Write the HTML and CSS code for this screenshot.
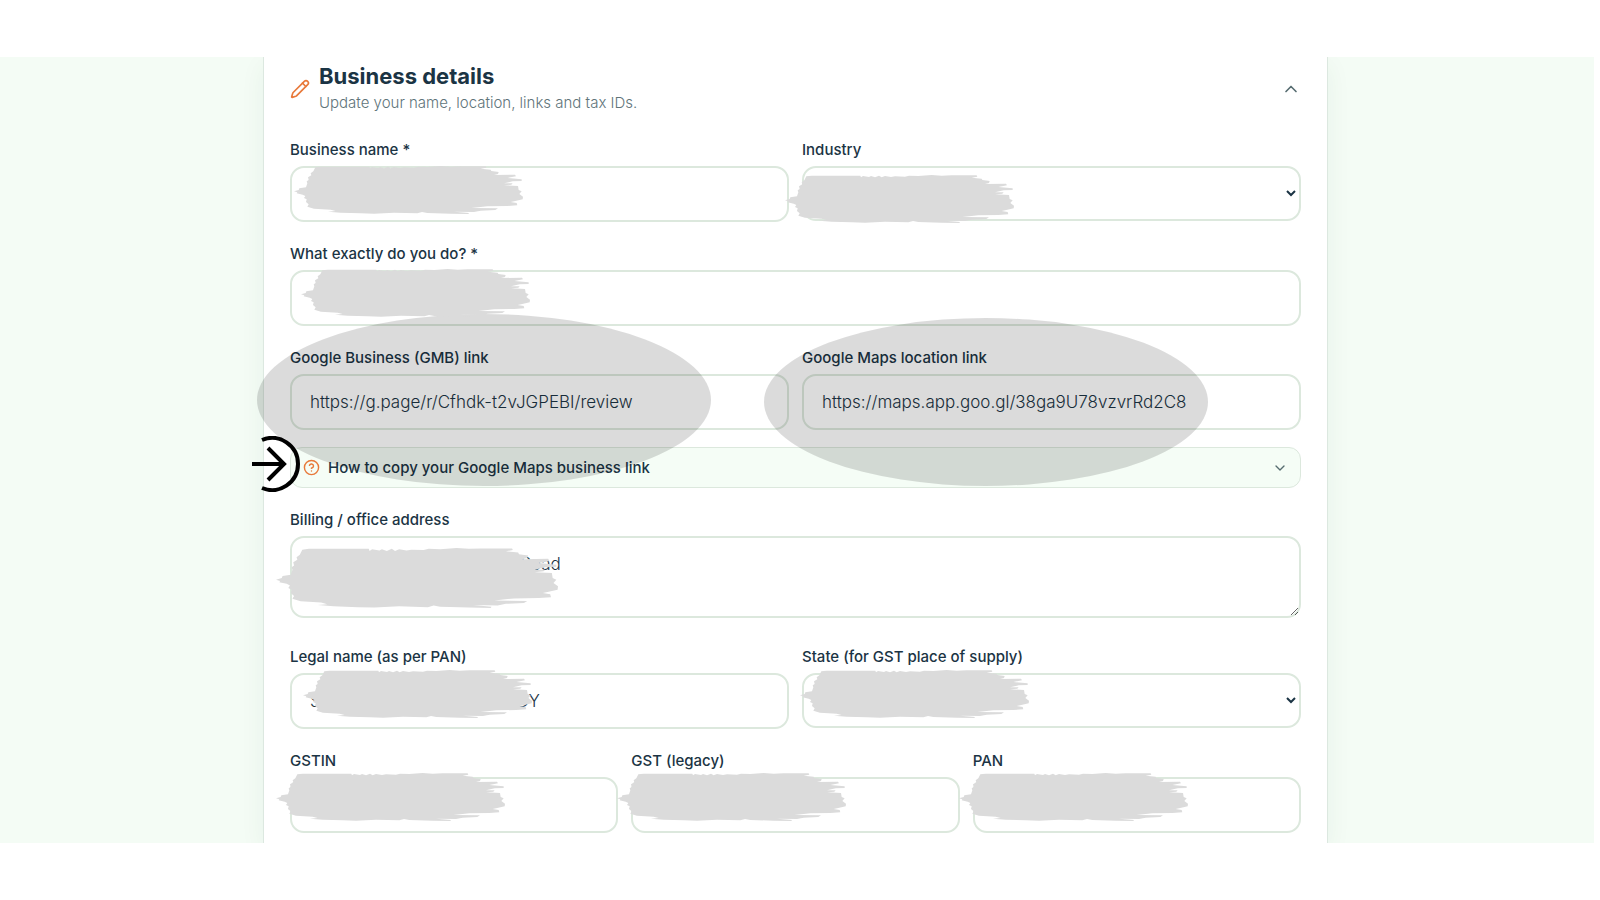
FILE: index.html
```html
<!DOCTYPE html>
<html lang="en">
<head>
<meta charset="utf-8">
<meta name="viewport" content="width=device-width, initial-scale=1.0">
<link rel="stylesheet" href="styles.css">
<title>Business details</title>
</head>
<body>
  <!-- Shared shapes -->
  <svg class="defs" aria-hidden="true">
    <symbol id="brush" viewBox="0 0 687 144" preserveAspectRatio="none">
      <path d="M64 4 L80 2 L226 2 L228 7 L234 3 L252 6 L258 3 L270 7 L282 2 L290 7 L300 3 L318 6 L330 4 L360 5 L372 2 L400 3 L440 0 L470 2 L500 1 L575 1 L577 5 L560 8 L590 11 L592 15 L614 18 L612 24 L600 27 L663 26 L666 31 L640 36 L683 40 L683 45 L656 46 L630 52 L656 52 L652 56 L630 58 L672 60 L674 72 L683 76 L676 84 L687 92 L686 100 L664 105 L650 108 L668 111 L670 118 L640 120 L580 121 L532 126 L612 127 L604 132 L560 134 L540 138 L480 137 L525 141 L523 144 L470 143 L400 141 L384 138 L370 142 L300 140 L240 143 L200 142 L140 140 L102 137 L125 135 L110 131 L60 128 L40 122 L44 115 L36 108 L38 100 L30 96 L34 90 L26 86 L8 82 L10 79 L0 76 L14 72 L16 67 L36 64 L40 52 L38 46 L44 42 L42 34 L52 28 L50 22 L58 16 Z"/>
    </symbol>
  </svg>

  <main class="page">
    <form class="card">
      <button type="button" class="card-header">
        <svg class="icon-pencil" viewBox="0 0 24 24">
          <path d="M21.2 6.8a2.8 2.8 0 0 0-4-4L3.8 16.2a2 2 0 0 0-.5.8L2 21.4a.5.5 0 0 0 .6.6L7 20.7a2 2 0 0 0 .8-.5z"/>
          <path d="m15 5 4 4"/>
        </svg>
        <span class="card-heading">
          <span class="card-title">Business details</span>
          <span class="card-subtitle">Update your name, location, links and tax IDs.</span>
        </span>
        <svg class="icon-chevron" viewBox="0 0 24 24"><path d="m18 15-6-6-6 6"/></svg>
      </button>

      <div class="row two">
        <div class="field">
          <label for="name">Business name *</label>
          <input id="name" type="text">
          <svg class="brush brush-name"><use href="#brush"/></svg>
        </div>
        <div class="field">
          <label for="industry">Industry</label>
          <select id="industry"><option></option></select>
          <svg class="brush brush-industry"><use href="#brush"/></svg>
        </div>
      </div>

      <div class="row">
        <div class="field">
          <label for="what">What exactly do you do? *</label>
          <input id="what" type="text">
          <svg class="brush brush-what"><use href="#brush"/></svg>
        </div>
      </div>

      <div class="row two">
        <div class="field">
          <label for="gmb">Google Business (GMB) link</label>
          <input id="gmb" type="text" value="https://g.page/r/Cfhdk-t2vJGPEBI/review">
          <div class="spot spot-gmb"></div>
        </div>
        <div class="field">
          <label for="maps">Google Maps location link</label>
          <input id="maps" type="text" value="https://maps.app.goo.gl/38ga9U78vzvrRd2C8">
          <div class="spot spot-maps"></div>
        </div>
      </div>

      <div class="help">
        <button type="button" class="help-toggle">
          <svg class="icon-help" viewBox="0 0 24 24">
            <circle cx="12" cy="12" r="10"/>
            <path d="M9.1 9a3 3 0 0 1 5.8 1c0 2-3 3-3 3"/>
            <path d="M12 17h.01"/>
          </svg>
          <span class="help-text">How to copy your Google Maps business link</span>
          <svg class="icon-chevron small" viewBox="0 0 24 24"><path d="m6 9 6 6 6-6"/></svg>
        </button>
        <svg class="pointer" viewBox="0 0 50 56">
          <path d="M10 4A26 26 0 1 1 10 52"/>
          <path d="M0 28H32M16 12l16 16-16 16"/>
        </svg>
      </div>

      <div class="row">
        <div class="field">
          <label for="address">Billing / office address</label>
          <textarea id="address">&nbsp;&nbsp;&nbsp;&nbsp;&nbsp;&nbsp;&nbsp;&nbsp;&nbsp;&nbsp;&nbsp;&nbsp;&nbsp;&nbsp;&nbsp;&nbsp;&nbsp;&nbsp;&nbsp;&nbsp;&nbsp;&nbsp;&nbsp;&nbsp;&nbsp;&nbsp;&nbsp;&nbsp;&nbsp;&nbsp;&nbsp;&nbsp;&nbsp;&nbsp;&nbsp;&nbsp;&nbsp;&nbsp;&nbsp;&nbsp;&nbsp;&nbsp;&nbsp;&nbsp;Road</textarea>
          <svg class="brush brush-address"><use href="#brush"/></svg>
        </div>
      </div>

      <div class="row two">
        <div class="field">
          <label for="legal">Legal name (as per PAN)</label>
          <input id="legal" type="text" value="S&nbsp;&nbsp;&nbsp;&nbsp;&nbsp;&nbsp;&nbsp;&nbsp;&nbsp;&nbsp;&nbsp;&nbsp;&nbsp;&nbsp;&nbsp;&nbsp;&nbsp;&nbsp;&nbsp;&nbsp;&nbsp;&nbsp;&nbsp;&nbsp;&nbsp;&nbsp;&nbsp;&nbsp;&nbsp;&nbsp;&nbsp;&nbsp;&nbsp;&nbsp;&nbsp;&nbsp;&nbsp;&nbsp;&nbsp;&nbsp;&nbsp;DY">
          <svg class="brush brush-legal"><use href="#brush"/></svg>
        </div>
        <div class="field">
          <label for="state">State (for GST place of supply)</label>
          <select id="state"><option></option></select>
          <svg class="brush brush-state"><use href="#brush"/></svg>
        </div>
      </div>

      <div class="row three">
        <div class="field">
          <label for="gstin">GSTIN</label>
          <input id="gstin" type="text">
          <svg class="brush brush-tax"><use href="#brush"/></svg>
        </div>
        <div class="field">
          <label for="gst">GST (legacy)</label>
          <input id="gst" type="text">
          <svg class="brush brush-tax"><use href="#brush"/></svg>
        </div>
        <div class="field">
          <label for="pan">PAN</label>
          <input id="pan" type="text">
          <svg class="brush brush-tax"><use href="#brush"/></svg>
        </div>
      </div>
    </form>
  </main>
</body>
</html>
```

FILE: styles.css
```css
* {
  box-sizing: border-box;
}
body {
  margin: 0;
  padding: 57px 6px 57px 0;
  background: #fff;
  color: #1b3444;
  font-family: Inter, "Noto Sans", sans-serif;
}
svg {
  fill: none;
  stroke: currentColor;
  stroke-width: 2;
  stroke-linecap: round;
  stroke-linejoin: round;
}
.defs {
  position: absolute;
  width: 0;
  height: 0;
}
.page {
  padding-right: 3px;
  background: #f4fcf5;
  overflow: hidden;
}
.card {
  max-width: 1065px;
  margin: 0 auto;
  padding: 5px 26px 10px;
  background: #fff;
  border: solid #dce8e0;
  border-width: 0 1px;
  box-shadow: 0 8px 24px rgba(30, 80, 50, 0.06);
}

/* Header */
.card-header {
  display: flex;
  align-items: center;
  gap: 9px;
  width: 100%;
  margin-bottom: 22px;
  padding: 0;
  border: 0;
  background: none;
  color: inherit;
  font: inherit;
  text-align: left;
}
.card-heading {
  flex: 1;
}
.card-title,
.card-subtitle {
  display: block;
}
.card-title {
  font-size: 22px;
  font-weight: 700;
  line-height: 28px;
}
.card-subtitle {
  color: #60747a;
  font-size: 15px;
  font-weight: 300;
  line-height: 26px;
}
.icon-pencil {
  width: 20px;
  height: 20px;
  color: #e8793a;
}
.icon-chevron {
  width: 20px;
  height: 20px;
  color: #566c70;
}
.icon-chevron.small {
  width: 16px;
  height: 16px;
}

/* Form */
.row {
  display: grid;
  gap: 13px;
  margin-bottom: 20px;
}
.row.two {
  grid-template-columns: repeat(2, 1fr);
}
.row.three {
  grid-template-columns: repeat(3, 1fr);
}
.row:last-child {
  margin-bottom: 0;
}
.field {
  position: relative;
  min-width: 0;
}
label {
  display: block;
  margin-bottom: 4px;
  font-size: 15px;
  font-weight: 500;
  line-height: 24px;
}
input,
select,
textarea {
  display: block;
  width: 100%;
  height: 56px;
  padding: 0 18px;
  border: 2px solid #dce8dd;
  border-radius: 14px;
  background: #fff;
  color: #1b3444;
  font-family: inherit;
  font-size: 17px;
  font-weight: 300;
}
select {
  height: 55px;
  padding: 0;
}
textarea {
  height: 82px;
  margin-bottom: 7px;
  padding: 13px 18px;
  line-height: 27px;
  overflow: hidden;
  resize: vertical;
}

/* Help bar */
.help {
  position: relative;
  margin: -3px 0 20px;
}
.help-toggle {
  display: flex;
  align-items: center;
  gap: 8px;
  width: 100%;
  height: 41px;
  padding: 0 12px;
  border: 1px solid #dce8dd;
  border-radius: 12px;
  background: #f5fdf6;
  color: inherit;
  font-family: inherit;
  font-size: 15px;
  font-weight: 500;
  text-align: left;
}
.help-text {
  flex: 1;
}
.icon-help {
  width: 17px;
  height: 17px;
  color: #e8793a;
}

/* Overlays: redaction strokes, highlights and the pointer */
.brush {
  position: absolute;
  z-index: 2;
  width: 229px;
  height: 48px;
  fill: #dbdbdb;
  stroke: none;
}
.brush-name {
  left: 4px;
  top: 28px;
}
.brush-industry {
  left: -17px;
  top: 37px;
}
.brush-what {
  left: 11px;
  top: 27px;
}
.brush-address {
  left: -14px;
  top: 40px;
  width: 282px;
  height: 60px;
}
.brush-legal {
  left: 13px;
  top: 25px;
}
.brush-state {
  left: -2px;
  top: 25px;
}
.brush-tax {
  left: -14px;
  top: 24px;
}
.spot {
  position: absolute;
  z-index: 1;
  border-radius: 50%;
  background: rgba(0, 0, 0, 0.14);
  pointer-events: none;
}
.spot-gmb {
  left: -33px;
  top: -32px;
  width: 454px;
  height: 172px;
}
.spot-maps {
  left: -38px;
  top: -28px;
  width: 444px;
  height: 168px;
}
.pointer {
  position: absolute;
  z-index: 2;
  left: -38px;
  top: -11px;
  width: 50px;
  height: 56px;
  color: #000;
  stroke-width: 4;
  stroke-linecap: butt;
  stroke-linejoin: miter;
}
```
